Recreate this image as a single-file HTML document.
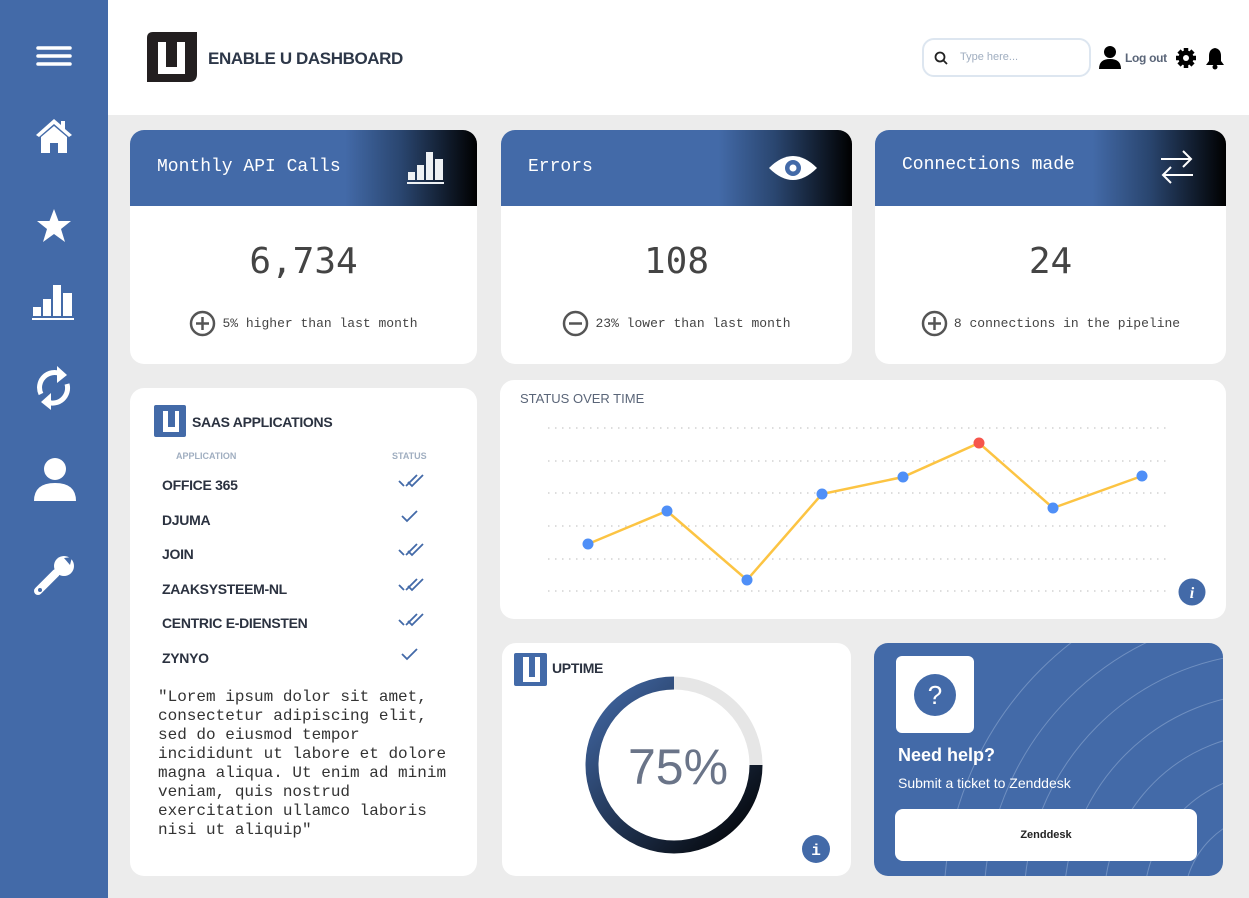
<!DOCTYPE html>
<html style="overflow:hidden"><head><meta charset="utf-8"><style>
*{margin:0;padding:0;box-sizing:border-box}
html,body{width:1249px;height:898px;overflow:hidden}
body{background:#ececec;position:relative;font-family:"Liberation Sans",sans-serif}
.abs{position:absolute}
.side{left:0;top:0;width:108px;height:898px;background:#436aa8}
.hdr{left:108px;top:0;width:1141px;height:115px;background:#fff}
.card{position:absolute;background:#fff;border-radius:14px;overflow:hidden}
.ch{position:absolute;left:0;top:0;right:0;height:76px;background:linear-gradient(90deg,#436aa8 0%,#436aa8 62%,#2a4670 78%,#000 100%);color:#fff;font-family:"Liberation Mono",monospace;font-size:18px}
.ch span{position:absolute;left:27px;top:27px}
.big{position:absolute;left:0;right:0;top:111px;text-align:center;font-family:"DejaVu Sans Mono","Liberation Mono",monospace;font-size:36px;color:#444}
.sub{position:absolute;left:0;right:0;top:180px;text-align:center;font-family:"Liberation Mono",monospace;font-size:13px;color:#444}
.sub svg{vertical-align:middle;margin-right:6px}
.row{position:absolute;left:32px;font-weight:bold;font-size:14px;color:#2b3240;letter-spacing:-0.3px}
.chk{position:absolute;left:268px}
</style></head><body>
<div class="abs side">
<svg class="abs" style="left:36px;top:45px" width="36" height="22"><g stroke="#fff" stroke-width="3.5" stroke-linecap="round"><line x1="2" y1="3" x2="34" y2="3"/><line x1="2" y1="11" x2="34" y2="11"/><line x1="2" y1="19" x2="34" y2="19"/></g></svg>
<svg class="abs" style="left:34px;top:117px" width="40" height="38"><path d="M20 2 L2 18 L5 20 L20 7 L35 20 L38 18 L31 12 L31 4 L27 4 L27 8 Z" fill="#fff"/><path d="M7 20 L20 9 L33 20 L33 36 L24 36 L24 26 L16 26 L16 36 L7 36 Z" fill="#fff"/></svg>
<svg class="abs" style="left:35px;top:207px" width="38" height="38"><polygon points="19,2 23.5,14 36,14 26,22 30,35 19,27 8,35 12,22 2,14 14.5,14" fill="#fff"/></svg>
<svg class="abs" style="left:32px;top:283px" width="44" height="38"><g fill="#fff"><rect x="1" y="24" width="8" height="9"/><rect x="11" y="16" width="8" height="17"/><rect x="21" y="2" width="8" height="31"/><rect x="31" y="10" width="9" height="23"/><rect x="0" y="35" width="42" height="2"/></g></svg>
<svg class="abs" style="left:33px;top:364px" width="42" height="48"><g fill="none" stroke="#fff" stroke-width="5"><path d="M8 30 A15 15 0 0 1 28 10"/><path d="M34 20 A15 15 0 0 1 14 38"/></g><polygon points="24,2 34,11 24,19" fill="#fff"/><polygon points="18,29 8,38 18,46" fill="#fff"/></svg>
<svg class="abs" style="left:33px;top:457px" width="44" height="48"><circle cx="22" cy="12" r="11" fill="#fff"/><path d="M1 44 Q1 26 22 26 Q43 26 43 44 Z" fill="#fff"/></svg>
<svg class="abs" style="left:34px;top:553px" width="42" height="44"><path d="M4 38 L22 20" stroke="#fff" stroke-width="8" stroke-linecap="round"/><circle cx="30" cy="13" r="10" fill="#fff"/><path d="M30 5 L38 4 L36 12 Z" fill="#436aa8"/><circle cx="6" cy="37" r="2" fill="#436aa8"/></svg>
</div>
<div class="abs hdr">
<svg class="abs" style="left:39px;top:32px" width="50" height="50"><path d="M6 0 H50 V42 Q50 50 42 50 H0 V6 Q0 0 6 0Z" fill="#231f20"/><path d="M11 10 H19 V35 H30 V10 H38 V42 H11Z" fill="#fff"/></svg>
<div class="abs" style="left:100px;top:49px;font-size:17px;font-weight:bold;color:#2d3748;letter-spacing:-0.4px">ENABLE U DASHBOARD</div>
<div class="abs" style="left:814px;top:38px;width:169px;height:39px;border:2px solid #dde6f0;border-radius:12px;background:#fff"></div>
<svg class="abs" style="left:826px;top:51px" width="14" height="14"><circle cx="6" cy="6" r="4.5" fill="none" stroke="#222" stroke-width="1.8"/><line x1="9.5" y1="9.5" x2="13" y2="13" stroke="#222" stroke-width="1.8"/></svg>
<div class="abs" style="left:852px;top:51px;font-size:11px;color:#a0aec0">Type here...</div>
<svg class="abs" style="left:991px;top:46px" width="22" height="23"><circle cx="11" cy="6" r="6" fill="#000"/><path d="M0 23 Q0 13 11 13 Q22 13 22 23Z" fill="#000"/></svg>
<div class="abs" style="left:1017px;top:51px;font-size:12px;font-weight:bold;color:#5a6578;letter-spacing:-0.3px">Log out</div>
<svg class="abs" style="left:1067px;top:47px" width="22" height="22" viewBox="0 0 22 22"><g fill="#000"><circle cx="11" cy="11" r="7.5"/><g stroke="#000" stroke-width="4.5"><line x1="11" y1="1" x2="11" y2="21"/><line x1="1" y1="11" x2="21" y2="11"/><line x1="4" y1="4" x2="18" y2="18"/><line x1="18" y1="4" x2="4" y2="18"/></g></g><circle cx="11" cy="11" r="3" fill="#fff"/></svg>
<svg class="abs" style="left:1097px;top:46px" width="20" height="24"><path d="M10 2 Q16 3 16 10 L16 15 L19 19 H1 L4 15 L4 10 Q4 3 10 2Z" fill="#000"/><circle cx="10" cy="21" r="2.5" fill="#000"/></svg>
</div>

<div class="card" style="left:130px;top:130px;width:347px;height:234px">
<div class="ch"><span>Monthly API Calls</span>
<svg class="abs" style="left:277px;top:20px" width="40" height="35"><g fill="#eef1f4"><rect x="1" y="22" width="7" height="8"/><rect x="10" y="15" width="7" height="15"/><rect x="19" y="2" width="7" height="28"/><rect x="28" y="9" width="8" height="21"/><rect x="0" y="32" width="37" height="2"/></g></svg></div>
<div class="big">6,734</div>
<div class="sub"><svg width="27" height="27"><circle cx="13.5" cy="13.5" r="11.5" fill="none" stroke="#555" stroke-width="2.5"/><path d="M13.5 7v13M7 13.5h13" stroke="#555" stroke-width="2.5"/></svg>5% higher than last month</div>
</div>
<div class="card" style="left:501px;top:130px;width:351px;height:234px">
<div class="ch"><span>Errors</span>
<svg class="abs" style="left:266px;top:22px" width="52" height="32"><path d="M2 16 Q26 -8 50 16 Q26 40 2 16Z" fill="#fff"/><circle cx="26" cy="16" r="8" fill="#436aa8"/><circle cx="26" cy="16" r="3.5" fill="#fff"/></svg></div>
<div class="big">108</div>
<div class="sub"><svg width="27" height="27"><circle cx="13.5" cy="13.5" r="11.5" fill="none" stroke="#555" stroke-width="2.5"/><path d="M7 13.5h13" stroke="#555" stroke-width="2.5"/></svg>23% lower than last month</div>
</div>
<div class="card" style="left:875px;top:130px;width:351px;height:234px">
<div class="ch"><span style="top:25px">Connections made</span>
<svg class="abs" style="left:284px;top:18px" width="36" height="38"><g stroke="#fff" stroke-width="2" fill="none"><path d="M2 11H32M24 3l8 8-8 8"/><path d="M34 27H4M12 19l-8 8 8 8"/></g></svg></div>
<div class="big">24</div>
<div class="sub"><svg width="27" height="27"><circle cx="13.5" cy="13.5" r="11.5" fill="none" stroke="#555" stroke-width="2.5"/><path d="M13.5 7v13M7 13.5h13" stroke="#555" stroke-width="2.5"/></svg>8 connections in the pipeline</div>
</div>

<div class="card" style="left:130px;top:388px;width:347px;height:488px">
<svg class="abs" style="left:24px;top:17px" width="32" height="32"><rect width="32" height="32" rx="2" fill="#436aa8"/><path d="M9 6H14V22H21V6H25V27H9Z" fill="#fff"/></svg>
<div class="abs" style="left:62px;top:26px;font-size:14px;font-weight:bold;color:#2b3240;letter-spacing:-0.3px">SAAS APPLICATIONS</div>
<div class="abs" style="left:46px;top:63px;font-size:9px;font-weight:bold;color:#a0aec0">APPLICATION</div>
<div class="abs" style="left:262px;top:63px;font-size:9px;font-weight:bold;color:#a0aec0">STATUS</div>
<div class="row" style="top:89px">OFFICE 365</div>
<div class="row" style="top:124px">DJUMA</div>
<div class="row" style="top:158px">JOIN</div>
<div class="row" style="top:193px">ZAAKSYSTEEM-NL</div>
<div class="row" style="top:227px">CENTRIC E-DIENSTEN</div>
<div class="row" style="top:262px">ZYNYO</div>
<svg class="chk" style="top:85px" width="26" height="16"><path d="M1 8l5 5 M8 13L19 2 M10 9l4 4L25 2" stroke="#436aa8" stroke-width="1.8" fill="none"/></svg>
<svg class="chk" style="top:121px" width="26" height="16"><path d="M4 7l5 5L19 2" stroke="#436aa8" stroke-width="1.8" fill="none"/></svg>
<svg class="chk" style="top:154px" width="26" height="16"><path d="M1 8l5 5 M8 13L19 2 M10 9l4 4L25 2" stroke="#436aa8" stroke-width="1.8" fill="none"/></svg>
<svg class="chk" style="top:189px" width="26" height="16"><path d="M1 8l5 5 M8 13L19 2 M10 9l4 4L25 2" stroke="#436aa8" stroke-width="1.8" fill="none"/></svg>
<svg class="chk" style="top:224px" width="26" height="16"><path d="M1 8l5 5 M8 13L19 2 M10 9l4 4L25 2" stroke="#436aa8" stroke-width="1.8" fill="none"/></svg>
<svg class="chk" style="top:259px" width="26" height="16"><path d="M4 7l5 5L19 2" stroke="#436aa8" stroke-width="1.8" fill="none"/></svg>
<div class="abs" style="left:28px;top:300px;font-family:'Liberation Mono',monospace;font-size:16px;line-height:19px;color:#333">"Lorem ipsum dolor sit amet,<br>consectetur adipiscing elit,<br>sed do eiusmod tempor<br>incididunt ut labore et dolore<br>magna aliqua. Ut enim ad minim<br>veniam, quis nostrud<br>exercitation ullamco laboris<br>nisi ut aliquip"</div>
</div>

<div class="card" style="left:500px;top:380px;width:726px;height:239px">
<div class="abs" style="left:20px;top:11px;font-size:13px;color:#5a6578">STATUS OVER TIME</div>
<svg class="abs" style="left:0;top:0" width="726" height="239">
<g stroke="#bbb" stroke-width="1" stroke-dasharray="1.5 5.5"><line x1="48" y1="48" x2="668" y2="48"/><line x1="48" y1="81" x2="668" y2="81"/><line x1="48" y1="113" x2="668" y2="113"/><line x1="48" y1="146" x2="668" y2="146"/><line x1="48" y1="179" x2="668" y2="179"/><line x1="48" y1="211" x2="668" y2="211"/></g>
<polyline points="88,164 167,131 247,200 322,114 403,97 479,63 553,128 642,96" fill="none" stroke="#fcc443" stroke-width="2.5"/>
<g fill="#4f8ff7"><circle cx="88" cy="164" r="5.5"/><circle cx="167" cy="131" r="5.5"/><circle cx="247" cy="200" r="5.5"/><circle cx="322" cy="114" r="5.5"/><circle cx="403" cy="97" r="5.5"/><circle cx="553" cy="128" r="5.5"/><circle cx="642" cy="96" r="5.5"/></g>
<circle cx="479" cy="63" r="5.5" fill="#f6554b"/>
<circle cx="692" cy="212" r="13.5" fill="#436aa8"/>
<text x="692" y="218" text-anchor="middle" font-family="Liberation Serif" font-style="italic" font-weight="bold" font-size="16" fill="#fff">i</text>
</svg>
</div>

<div class="card" style="left:502px;top:643px;width:349px;height:233px">
<svg class="abs" style="left:12px;top:10px" width="33" height="33"><rect width="33" height="33" rx="2" fill="#436aa8"/><path d="M9 4H15V24H21V4H26V29H9Z" fill="#fff"/></svg>
<div class="abs" style="left:50px;top:17px;font-size:14px;font-weight:bold;color:#2b3240;letter-spacing:-0.3px">UPTIME</div>
<svg class="abs" style="left:0;top:0" width="349" height="233">
<defs><linearGradient id="g" x1="0" y1="0" x2="1" y2="1"><stop offset="0" stop-color="#436aa8"/><stop offset="1" stop-color="#000"/></linearGradient></defs>
<circle cx="172" cy="122" r="82" fill="none" stroke="#e6e6e6" stroke-width="13"/>
<path d="M172 40 A82 82 0 1 0 254 122" fill="none" stroke="url(#g)" stroke-width="13"/>
<text x="176" y="141" text-anchor="middle" font-family="Liberation Sans" font-size="50" fill="#6a7488">75%</text>
<circle cx="314" cy="206" r="14" fill="#436aa8"/>
<text x="314" y="212" text-anchor="middle" font-family="Liberation Mono" font-weight="bold" font-size="16" fill="#fff">i</text>
</svg>
</div>

<div class="card" style="left:874px;top:643px;width:349px;height:233px;background:#436aa8">
<svg class="abs" style="left:0;top:0" width="349" height="233"><g fill="none" stroke="#6f8fc0" stroke-width="1"><circle cx="400" cy="260" r="50"/><circle cx="400" cy="260" r="90"/><circle cx="400" cy="260" r="130"/><circle cx="400" cy="260" r="170"/><circle cx="400" cy="260" r="210"/><circle cx="400" cy="260" r="250"/><circle cx="400" cy="260" r="290"/><circle cx="400" cy="260" r="330"/></g></svg>
<div class="abs" style="left:22px;top:13px;width:78px;height:77px;background:#fff;border-radius:6px"></div>
<svg class="abs" style="left:40px;top:31px" width="42" height="42"><circle cx="21" cy="21" r="21" fill="#436aa8"/><text x="21" y="30" text-anchor="middle" font-family="Liberation Sans" font-size="26" fill="#fff">?</text></svg>
<div class="abs" style="left:24px;top:102px;font-size:18px;font-weight:bold;color:#fff">Need help?</div>
<div class="abs" style="left:24px;top:132px;font-size:14px;color:#fff">Submit a ticket to Zenddesk</div>
<div class="abs" style="left:21px;top:166px;width:302px;height:52px;background:#fff;border-radius:8px;text-align:center;line-height:52px;font-size:11px;font-weight:bold;color:#222">Zenddesk</div>
</div>
</body></html>
